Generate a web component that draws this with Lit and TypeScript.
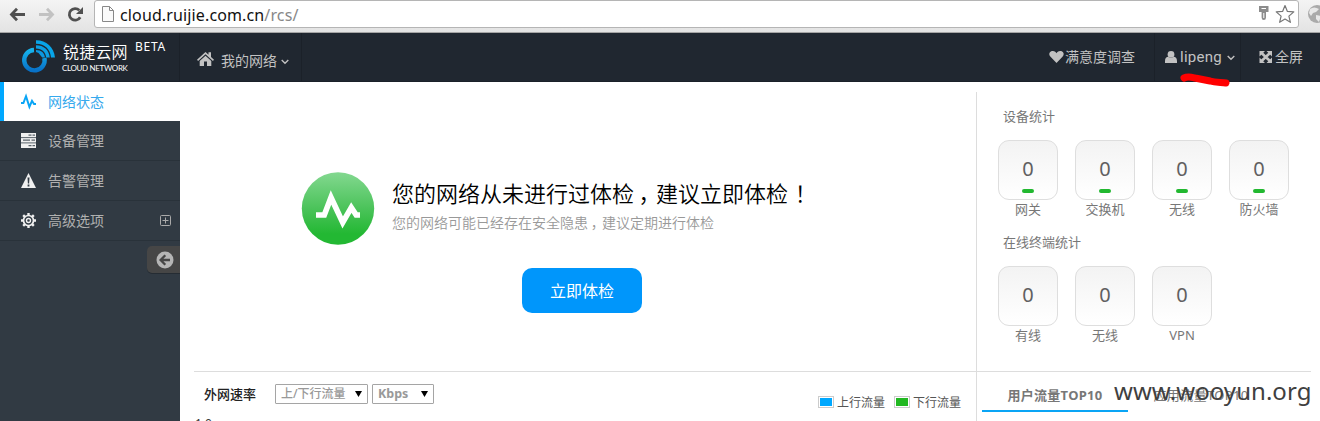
import { LitElement, html, css, svg } from "lit";
import { customElement, property } from "lit/decorators.js";

const pulse = svg`<path d="M0 9h2.4L5 2.2l3.4 10.6 2.6-6L13 10h2" fill="none" stroke="#0aa5f5" stroke-width="2"/>`;
const servers = svg`<path d="M0 0h15v15H0z" fill="#f0f0f0"/><path d="M0 4.6h15M0 9.9h15" stroke="#5a636b" stroke-width="1"/><path d="M7.5 2.2h3M11.5 2.2H14M2 7.2h7M10.5 7.2H14M7.5 12.6h3M11.5 12.6H14" stroke="#59626a" stroke-width="1.2"/>`;
const warning = svg`<path d="M7.5 0 15 15H0z" fill="#f0f0f0"/><path d="M6.5 4.5h2l-.4 6H6.9zM6.6 11.6h1.8v1.8H6.6z" fill="#313a43"/>`;
const gear = svg`<circle cx="7.5" cy="7.5" r="5" fill="none" stroke="#f0f0f0" stroke-width="1.7"/><circle cx="7.5" cy="7.5" r="2" fill="none" stroke="#f0f0f0" stroke-width="1.4"/><path d="M7.5 0v2.5M7.5 12.5V15M0 7.5h2.5M12.5 7.5H15M2.2 2.2 4 4M11 11l1.8 1.8M2.2 12.8 4 11M11 4l1.8-1.8" stroke="#f0f0f0" stroke-width="2.4"/>`;

@customElement("stat-box")
class StatBox extends LitElement {
  @property() label = "";
  @property() value = "0";
  @property({ type: Boolean }) bar = false;
  static styles = css`
    :host { display: block; width: 60px; text-align: center; }
    .box { box-sizing: border-box; height: 60px; border: 1px solid #dedede; border-radius: 11px; background: linear-gradient(#f3f3f3, #fff); display: flex; flex-direction: column; align-items: center; padding-top: 12px; }
    .num { font-size: 20px; line-height: 32px; color: #606060; height: 36px; font-family: "Noto Sans", sans-serif; font-weight: 400; }
    .bar { width: 12px; height: 4px; border-radius: 2px; background: #22b830; }
    .label { font-size: 13px; line-height: 18px; height: 18px; color: #777; white-space: nowrap; }
  `;
  render() {
    return html`<div class="box"><div class="num">${this.value}</div>${this.bar ? html`<div class="bar"></div>` : ""}</div>
      <div class="label">${this.label}</div>`;
  }
}

@customElement("app-root")
class AppRoot extends LitElement {
  static styles = css`
    :host { display: block; position: relative; width: 1320px; height: 421px; overflow: hidden; background: #fff; font-family: "Noto Sans", "Noto Sans CJK SC", sans-serif; }
    svg { display: block; flex: none; overflow: visible; }
    .browser { box-sizing: border-box; height: 33px; display: flex; align-items: flex-start; background: linear-gradient(#f4f4f4, #e3e3e3); border-bottom: 1px solid #a5a5a5; }
    .tools { width: 94px; height: 29px; }
    .url { box-sizing: border-box; width: 1205px; flex: none; height: 28px; border: 1px solid #b5b5b5; border-radius: 3px; background: #fff; display: flex; align-items: center; padding-left: 7px; }
    .address { margin: 2px 0 0 6px; flex: 1; font-size: 16px; line-height: 24px; color: #111; white-space: nowrap; letter-spacing: 0.13px; }
    .path { color: #888; }
    .globe { margin: 5px 0 0 9px; }
    .top { height: 49px; display: flex; background: #202730; color: #c2c2c2; box-shadow: inset 0 -1px #1b2129; }
    .brand { width: 180px; display: flex; box-sizing: border-box; padding-left: 21px; border-right: 1px solid #1b2129; }
    .mark { margin-top: 6px; }
    .names { margin: 8px 0 0 7px; width: 66px; color: #fff; white-space: nowrap; }
    .cn { font-size: 16px; line-height: 22px; margin-left: 1px; letter-spacing: 0.2px; font-weight: 350; }
    .en { font-size: 8px; line-height: 10px; font-family: "Lato", sans-serif; letter-spacing: -0.34px; }
    .beta { margin: 5px 0 0 7px; font-size: 12px; line-height: 18px; color: #fff; letter-spacing: .75px; }
    .nav { box-sizing: border-box; width: 122px; border-right: 1px solid #1b2129; display: flex; padding: 17px 0 0 17px; font-size: 14px; line-height: 22px; }
    .home { margin-top: -1px; }
    .navtext { margin: 0 4px 0 7px; }
    .space { flex: 1; }
    .survey { width: 105px; display: flex; padding-top: 13px; font-size: 14px; line-height: 22px; white-space: nowrap; border-right: 1px solid #1b2129; }
    .user { box-sizing: border-box; width: 86px; display: flex; padding: 13px 0 0 9px; font-size: 15px; line-height: 22px; border-right: 1px solid #1b2129; font-family: Roboto, sans-serif; }
    .name { letter-spacing: .27px; margin-right: 5px; }
    .full { width: 79px; box-sizing: border-box; display: flex; padding: 13px 0 0 18px; font-size: 14px; line-height: 22px; }
    .main { display: flex; height: 339px; }
    .side { width: 180px; flex: none; background: #313a43; }
    .item { box-sizing: border-box; height: 40px; display: flex; align-items: center; padding-left: 21px; border-bottom: 1px solid #29323a; color: #b0b0b0; font-size: 14px; }
    .item.on { height: 39px; border-left: 4px solid #00a8ff; border-bottom: 0; padding-left: 17px; background: #fff; color: #36a9ed; }
    .itemtext { margin-left: 12px; width: 112px; line-height: 20px; }
    .fold { box-sizing: border-box; width: 33px; height: 27px; margin: 5px 0 0 147px; padding: 5px 0 0 9px; background: #464646; border-radius: 5px 0 0 5px; box-shadow: 0 1px #252c33; }
    .left { box-sizing: border-box; width: 797px; display: flex; flex-direction: column; padding-left: 14px; }
    .check { box-sizing: border-box; height: 289px; padding: 90px 0 0 108px; }
    .notice { display: flex; height: 96px; }
    .copy { margin-left: 18px; white-space: nowrap; }
    .title { font-size: 22px; line-height: 43px; font-weight: 350; color: #000; }
    .sub { margin-top: -1px; font-size: 14px; line-height: 18px; color: #999; font-weight: 350; }
    .comma { padding-left: .2em; margin-right: -.2em; }
    .bang { padding-left: .3em; margin-right: -.3em; }
    .btn { display: block; width: 120px; height: 45px; border: 0; padding: 0 0 1px; margin-left: 220px; border-radius: 10px; background: #0096fb; color: #fff; font: 16px "Noto Sans CJK SC", sans-serif; }
    .speed { box-sizing: border-box; height: 50px; border-top: 1px solid #ddd; display: flex; padding: 12px 16px 0 10px; }
    .heading { font-size: 13px; line-height: 20px; font-weight: 500; width: 71px; color: #222; }
    .select { box-sizing: border-box; height: 20px; border: 1px solid #a5a5a5; border-radius: 1px; display: flex; align-items: center; justify-content: space-between; padding: 0 5px; color: #999; font-size: 12px; line-height: 18px; font-weight: 500; white-space: nowrap; }
    .dir { width: 93px; margin-right: 4px; }
    .unit { width: 62px; font-weight: 700; font-size: 12.5px; }
    .legend { margin-top: 9px; display: flex; align-items: center; height: 18px; font-size: 12px; color: #555; }
    .swatch { box-sizing: border-box; width: 16px; height: 12px; border: 1px solid #ccc; padding: 1px; margin-right: 3px; }
    .fill { height: 8px; background: #00a8ff; }
    .fill.green { background: #22b822; }
    .word { width: 57px; }
    .word.last { width: 48px; }
    .right { width: 343px; display: flex; flex-direction: column; }
    .stats { box-sizing: border-box; height: 279px; margin-top: 10px; margin-left: -1px; border-left: 1px solid #ddd; padding: 14px 0 0 21px; }
    .label { margin-left: 5px; font-size: 13px; line-height: 20px; color: #777; }
    .row { display: flex; gap: 17px; padding-top: 14px; height: 92px; }
    .tabs { box-sizing: border-box; height: 50px; border-top: 1px solid #ddd; border-left: 1px solid #ddd; width: 335px; margin-left: -1px; display: flex; padding-left: 5px; font-size: 13px; color: #777; line-height: 20px; white-space: nowrap; }
    .tab { box-sizing: border-box; width: 146px; height: 40px; padding-top: 13px; text-align: center; letter-spacing: .35px; }
    .tab.on { border-bottom: 2px solid #0aa5f5; font-weight: 700; letter-spacing: .3px; }
    .scribble { position: absolute; left: 1180px; top: 72px; }
    .water { position: absolute; left: 1114px; top: 373px; font-size: 24px; line-height: 36px; color: #404040; white-space: nowrap; letter-spacing: .05px; }
    .axis { position: absolute; left: 195px; top: 419px; height: 2px; overflow: hidden; font-size: 12px; line-height: 10px; color: #333; }
  `;

  caret() {
    return html`<svg width="8" height="22"><path d="M.7 10 4 13.2 7.3 10" fill="none" stroke="#c2c2c2" stroke-width="1.4"/></svg>`;
  }

  item(icon: unknown, text: string, on = false, plus = false) {
    return html`<div class="item ${on ? "on" : ""}"><svg width="15" height="15">${icon}</svg><span class="itemtext">${text}</span>
      ${plus ? html`<svg width="11" height="11"><rect x=".5" y=".5" width="10" height="10" rx="1" fill="none" stroke="#aaa"/><path d="M2.5 5.5h6M5.5 2.5v6" stroke="#aaa"/></svg>` : ""}</div>`;
  }

  render() {
    return html`
      <div class="browser">
        <svg class="tools" viewBox="0 0 94 29">
          <path d="M25 14.5H12M17 8.8l-5.5 5.7 5.5 5.7" fill="none" stroke="#505050" stroke-width="2.8"/>
          <path d="M39 14.5h13M47 8.8l5.5 5.7-5.5 5.7" fill="none" stroke="#c2c2c2" stroke-width="2.8"/>
          <path d="M80.2 17.2a5.8 5.8 0 1 1-.9-6.9" fill="none" stroke="#505050" stroke-width="2.8"/><path d="M83 7v7h-7z" fill="#505050"/>
        </svg>
        <div class="url">
          <svg width="12" height="16"><path d="M.5.5h7l4 4v11H.5zM7.5.5v4h4" fill="#fafafa" stroke="#888"/></svg>
          <div class="address">cloud.ruijie.com.cn<span class="path">/rcs/</span></div>
          <svg width="40" height="20"><path d="M1 2h9.5v6H8v5.5q0 2.5-2.2 2.5T3.6 13.500V8H1z" fill="#8c8c8c"/><path d="M3.500 4.500h4.500M5.800 9v5" stroke="#fff"/><path d="m27 1.500 2.400 5.900 6.400.5-4.900 4.200 1.500 6.200L27 15l-5.400 3.300 1.500-6.200-4.900-4.200 6.400-.5z" fill="#fff" stroke="#777" stroke-width="1.2" stroke-linejoin="round"/></svg>
        </div>
        <svg class="globe" width="18" height="18"><circle cx="9" cy="9" r="9" fill="#aaa"/><path d="M2 4q4-3 9 0L8 7 5 8 3 11 1 8zM8 10l5 1-2 6-3-3z" fill="#e8e8e8"/></svg>
      </div>
      <div class="top">
        <div class="brand">
          <svg class="mark" width="34" height="34"><defs><linearGradient id="m" x2="0" y2="1"><stop stop-color="#16b4ed"/><stop offset="1" stop-color="#0872c8"/></linearGradient></defs>
            <path d="M13 11A10.2 10.2 0 1 0 23.400 19" fill="none" stroke="url(#m)" stroke-width="4.4"/>
            <path d="M15 1.200C25 1 33 8 34 18.500h-4C29 10 24 5 15 4.800z" fill="#08a5e8"/><path d="M15 6.200C23 6.200 28 11 28.800 18.500h-3.600C24.500 13 21 9.800 15 9.500z" fill="#0b9fe3"/><path d="M15 11c5.500 0 8.500 3 9 7.500h-2.800L17.500 14 15 13z" fill="#0d97de"/>
          </svg>
          <div class="names"><div class="cn">锐捷云网</div><div class="en">CLOUD NETWORK</div></div><div class="beta">BETA</div>
        </div>
        <div class="nav"><svg class="home" width="17" height="22"><path d="M0 10.700 8.500 3l3 2.700V3.200H14V8l3 2.700-1.100 1.200-7.400-6.600-7.400 6.600z" fill="#c2c2c2"/><path d="m2.700 12 5.800-5.200 5.800 5.200v5H10v-4.500H7V17H2.700z" fill="#c2c2c2"/></svg><span class="navtext">我的网络</span>${this.caret()}</div>
        <div class="space"></div>
        <div class="survey"><svg width="16" height="22"><path d="M7.500 17 1.300 10.600C-1 7.500 1 5 3.800 5 5.800 5 7 6.200 7.500 7.200 8 6.200 9.200 5 11.200 5 14 5 16 7.500 13.700 10.600z" fill="#c2c2c2"/></svg><span>满意度调查</span></div>
        <div class="user"><svg width="16" height="22"><circle cx="7" cy="8.400" r="3.400" fill="#c2c2c2"/><path d="M1 17v-2c0-3 1.600-4.300 3.200-4.300 1.800 1.600 3.800 1.600 5.600 0C11.400 10.700 13 12 13 15v2z" fill="#c2c2c2"/></svg><span class="name">lipeng</span>${this.caret()}</div>
        <div class="full"><svg width="16" height="22"><path d="M.5 5H6L.5 10.500zM7.500 5H13v5.500zM.5 11.500 6 17H.5zM13 11.500V17H7.500z" fill="#c2c2c2"/><path d="m2 6.500 9.500 9M11.500 6.500l-9.500 9" stroke="#c2c2c2" stroke-width="2.6"/></svg><span>全屏</span></div>
      </div>
      <div class="main">
        <div class="side">
          ${this.item(pulse, "网络状态", true)}${this.item(servers, "设备管理")}${this.item(warning, "告警管理")}${this.item(gear, "高级选项", false, true)}
          <div class="fold"><svg width="18" height="18"><circle cx="9" cy="9" r="8.5" fill="#b5b5b5"/><path d="M14 9H5M9.300 4.300 4.600 9l4.700 4.700" fill="none" stroke="#464646" stroke-width="2.3"/></svg></div>
        </div>
        <div class="left">
          <div class="check">
            <div class="notice">
              <svg width="72" height="73"><defs><linearGradient id="g" x2="0" y2="1"><stop stop-color="#83d890"/><stop offset=".5" stop-color="#4bc35a"/><stop offset=".85" stop-color="#23b833"/></linearGradient></defs><circle cx="36" cy="36.5" r="36.2" fill="url(#g)"/><path d="M14 43h8.300L29 25.500 40.700 50.500 49.300 35.500 54.200 43H58" fill="none" stroke="#fff" stroke-width="5.6"/></svg>
              <div class="copy"><div class="title">您的网络从未进行过体检<span class="comma">，</span>建议立即体检<span class="bang">！</span></div><div class="sub">您的网络可能已经存在安全隐患<span class="comma">，</span>建议定期进行体检</div></div>
            </div>
            <button class="btn">立即体检</button>
          </div>
          <div class="speed">
            <div class="heading">外网速率</div>
            <div class="select dir"><span>上/下行流量</span><svg width="7" height="6"><path d="M0 0h7L3.500 6z"/></svg></div>
            <div class="select unit"><span>Kbps</span><svg width="7" height="6"><path d="M0 0h7L3.500 6z"/></svg></div>
            <div class="space"></div>
            <div class="legend"><div class="swatch"><div class="fill"></div></div><span class="word">上行流量</span><div class="swatch"><div class="fill green"></div></div><span class="word last">下行流量</span></div>
          </div>
        </div>
        <div class="right">
          <div class="stats">
            <div class="label">设备统计</div>
            <div class="row">${["网关", "交换机", "无线", "防火墙"].map((l) => html`<stat-box label=${l} bar></stat-box>`)}</div>
            <div class="label">在线终端统计</div>
            <div class="row">${["有线", "无线", "VPN"].map((l) => html`<stat-box label=${l}></stat-box>`)}</div>
          </div>
          <div class="tabs"><div class="tab on">用户流量TOP10</div><div class="tab">应用流量TOP10</div></div>
        </div>
      </div>
      <div class="axis">1.0</div>
      <svg class="scribble" width="52" height="16"><path d="M4 6c4-2 7-1 11 0l15 3c6 2 12 1 16 2" fill="none" stroke="#f00" stroke-width="7" stroke-linecap="round"/></svg>
      <div class="water">www.wooyun.org</div>
    `;
  }
}
